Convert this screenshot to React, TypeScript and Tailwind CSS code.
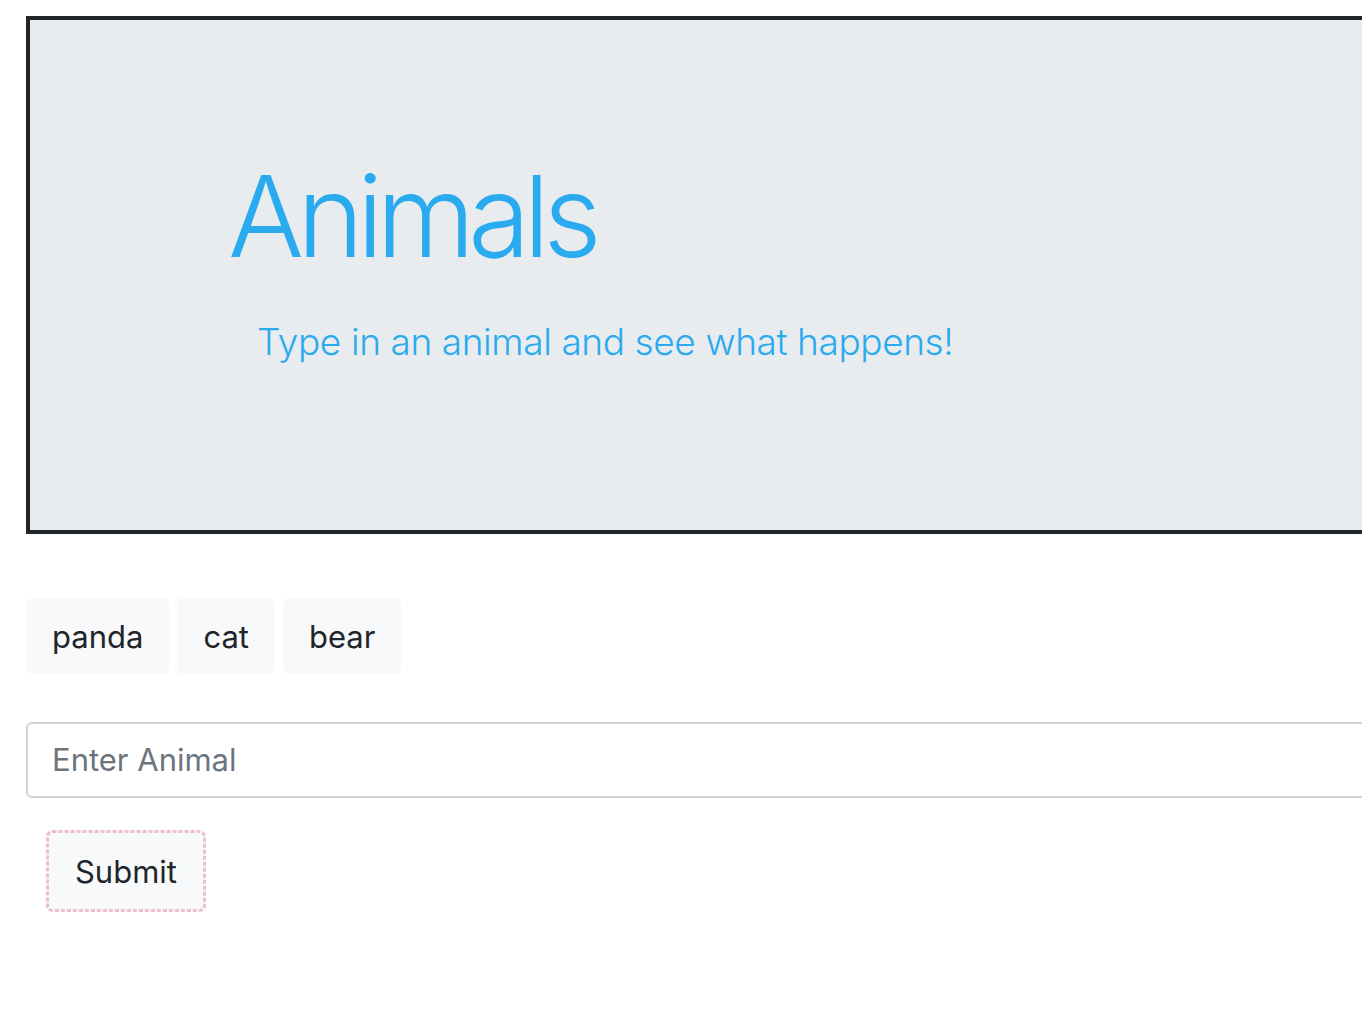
import React from "react";

export default function App() {
  const font = { fontFamily: "Inter, 'Noto Sans', sans-serif" };
  return (
    <div className="min-h-[1022px] w-[1362px] overflow-hidden bg-white" style={font}>
      <div className="pl-[26px] pt-[16px]">
        <div className="w-[1400px] h-[518px] border-4 border-[#212529] bg-[#e9ecef] pl-[198px] pt-[140px]">
          <h1 className="text-[113px] leading-none font-light text-[#2aabf0] tracking-[-6.8px]">Animals</h1>
          <p className="mt-[50px] ml-[29px] text-[37px] leading-none font-light text-[#2aabf0] tracking-[-0.4px]">
            Type in an animal and see what happens!
          </p>
        </div>

        <div className="mt-[64px] flex gap-[8px]">
          {["panda", "cat", "bear"].map((a) => (
            <button
              key={a}
              className="h-[76px] px-[26px] rounded-[6px] bg-[#f8f9fa] text-[#212529] text-[31px] leading-none"
            >
              {a}
            </button>
          ))}
        </div>

        <div className="mt-[48px] w-[1400px] h-[76px] rounded-[6px] border-2 border-[#ced4da] flex items-center pl-[24px]">
          <input
            className="w-full bg-transparent outline-none text-[31px] text-[#212529] placeholder:text-[#6c757d]"
            placeholder="Enter Animal"
          />
        </div>

        <div className="relative mt-[32px] ml-[20px] w-[160px] h-[82px] rounded-[6px] bg-[#f8f9fa] flex items-center justify-center">
          <svg className="absolute inset-0" width="160" height="82" viewBox="0 0 160 82">
            <rect
              x="1.5"
              y="1.5"
              width="157"
              height="79"
              rx="5"
              fill="none"
              stroke="#eebfca"
              strokeWidth="3"
              strokeDasharray="4 2"
            />
          </svg>
          <span className="relative text-[31px] text-[#212529] leading-none">Submit</span>
        </div>
      </div>
    </div>
  );
}
